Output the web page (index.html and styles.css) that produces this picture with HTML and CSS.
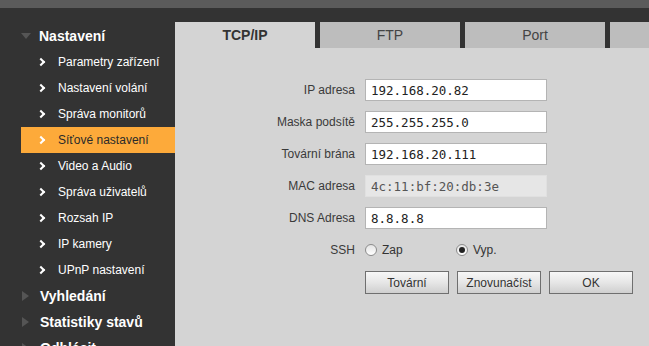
FILE: index.html
```html
<!DOCTYPE html>
<html lang="cs">

<head>
    <meta charset="UTF-8">
    <title>Nastavení sítě</title>
    <link rel="stylesheet" href="styles.css">
</head>

<body>
    <div class="topbar"></div>
    <div class="layout">
        <!-- levé menu -->
        <div class="sidebar">
            <div class="menu-head open"><span class="tri"></span>Nastavení</div>
            <div class="menu-item"><span class="chev"></span>Parametry zařízení</div>
            <div class="menu-item"><span class="chev"></span>Nastavení volání</div>
            <div class="menu-item"><span class="chev"></span>Správa monitorů</div>
            <div class="menu-item active"><span class="chev"></span>Síťové nastavení</div>
            <div class="menu-item"><span class="chev"></span>Video a Audio</div>
            <div class="menu-item"><span class="chev"></span>Správa uživatelů</div>
            <div class="menu-item"><span class="chev"></span>Rozsah IP</div>
            <div class="menu-item"><span class="chev"></span>IP kamery</div>
            <div class="menu-item"><span class="chev"></span>UPnP nastavení</div>
            <div class="menu-head"><span class="tri"></span>Vyhledání</div>
            <div class="menu-head"><span class="tri"></span>Statistiky stavů</div>
            <div class="menu-head"><span class="tri"></span>Odhlásit</div>
        </div>

        <!-- obsah -->
        <div class="content">
            <div class="tabs">
                <div class="tab active">TCP/IP</div>
                <div class="tab">FTP</div>
                <div class="tab">Port</div>
                <div class="tab"></div>
            </div>
            <div class="panel">
                <div class="form">
                    <label>IP adresa</label>
                    <input type="text" value="192.168.20.82">
                    <label>Maska podsítě</label>
                    <input type="text" value="255.255.255.0">
                    <label>Tovární brána</label>
                    <input type="text" value="192.168.20.111">
                    <label>MAC adresa</label>
                    <input type="text" class="readonly" value="4c:11:bf:20:db:3e" readonly>
                    <label>DNS Adresa</label>
                    <input type="text" value="8.8.8.8">
                    <label>SSH</label>
                    <div class="radios">
                        <span class="opt"><span class="radio"></span>Zap</span>
                        <span class="opt"><span class="radio checked"></span>Vyp.</span>
                    </div>
                    <span></span>
                    <div class="buttons">
                        <button class="btn">Tovární</button>
                        <button class="btn">Znovunačíst</button>
                        <button class="btn">OK</button>
                    </div>
                </div>
            </div>
        </div>
    </div>
</body>

</html>
```

FILE: styles.css
```css
* {
    margin: 0;
    padding: 0;
    box-sizing: border-box;
}

html,
body {
    height: 100%;
    overflow: hidden;
}

body {
    background-color: #333;
    font-family: "Liberation Sans", Arial, sans-serif;
    font-size: 12px;
}

.topbar {
    height: 8px;
    background-color: #5b5b5b;
}

.layout {
    display: flex;
    height: calc(100% - 8px);
}
/* levé menu */

.sidebar {
    width: 175px;
    flex-shrink: 0;
    padding-top: 15px;
}

.menu-head {
    height: 26px;
    display: flex;
    align-items: center;
    padding-left: 22px;
    color: #fff;
    font-size: 14px;
    font-weight: bold;
}

.menu-head .tri {
    width: 0;
    height: 0;
    margin-right: 11px;
    border-top: 5px solid transparent;
    border-bottom: 5px solid transparent;
    border-left: 7px solid #555;
}

.menu-head.open .tri {
    margin-left: -1px;
    margin-right: 8px;
    border-left: 5px solid transparent;
    border-right: 5px solid transparent;
    border-top: 6px solid #555;
    border-bottom: 0;
}

.menu-item {
    height: 26px;
    display: flex;
    align-items: center;
    padding-left: 38px;
    color: #fff;
}

.menu-item .chev {
    width: 6px;
    height: 6px;
    margin-right: 14px;
    border-top: 2px solid #fff;
    border-right: 2px solid #fff;
    transform: rotate(45deg);
}

.menu-item.active {
    margin-left: 21px;
    padding-left: 17px;
    background-color: #fdaa3a;
    color: #2a2a2a;
}
/* záložky */

.content {
    flex: 1;
    display: flex;
    flex-direction: column;
    padding-top: 14px;
    overflow: hidden;
}

.tabs {
    display: flex;
    gap: 5px;
    height: 26px;
}

.tab {
    width: 140px;
    flex-shrink: 0;
    line-height: 26px;
    text-align: center;
    font-size: 14px;
    color: #444;
    background-color: #bdbdbd;
}

.tab.active {
    background-color: #d4d4d4;
    color: #333;
    font-weight: bold;
}

.panel {
    flex: 1;
    background-color: #d4d4d4;
    padding-top: 31px;
}
/* formulář */

.form {
    display: grid;
    grid-template-columns: 180px 182px;
    grid-auto-rows: 22px;
    column-gap: 10px;
    row-gap: 10px;
}

.form label {
    text-align: right;
    line-height: 22px;
    color: #3a3a3a;
}

.form input {
    width: 182px;
    height: 22px;
    border: 1px solid #b4b4b4;
    background-color: #fff;
    padding: 0 5px;
    font-family: "DejaVu Sans Mono", monospace;
    font-size: 12.5px;
    color: #222;
    outline: none;
}

.form input.readonly {
    background-color: #e6e6e6;
    border-color: #e0e0e0;
    color: #555;
}

.radios {
    display: flex;
    align-items: center;
}

.opt {
    width: 104px;
    display: flex;
    align-items: center;
    color: #333;
}

.radio {
    width: 12px;
    height: 12px;
    margin-right: 5px;
    border: 1px solid #8c8c8c;
    border-radius: 50%;
    background: linear-gradient(#e4e4e4, #fff);
    display: flex;
    align-items: center;
    justify-content: center;
}

.radio.checked::after {
    content: "";
    width: 6px;
    height: 6px;
    border-radius: 50%;
    background-color: #222;
}

.buttons {
    display: flex;
    gap: 8px;
    height: 23px;
}

.btn {
    width: 84px;
    height: 23px;
    flex-shrink: 0;
    border: 1px solid #6f6f6f;
    background: linear-gradient(#f7f7f7, #e6e6e6 50%, #cfcfcf);
    font-family: "Liberation Sans", Arial, sans-serif;
    font-size: 12px;
    color: #333;
}
```
